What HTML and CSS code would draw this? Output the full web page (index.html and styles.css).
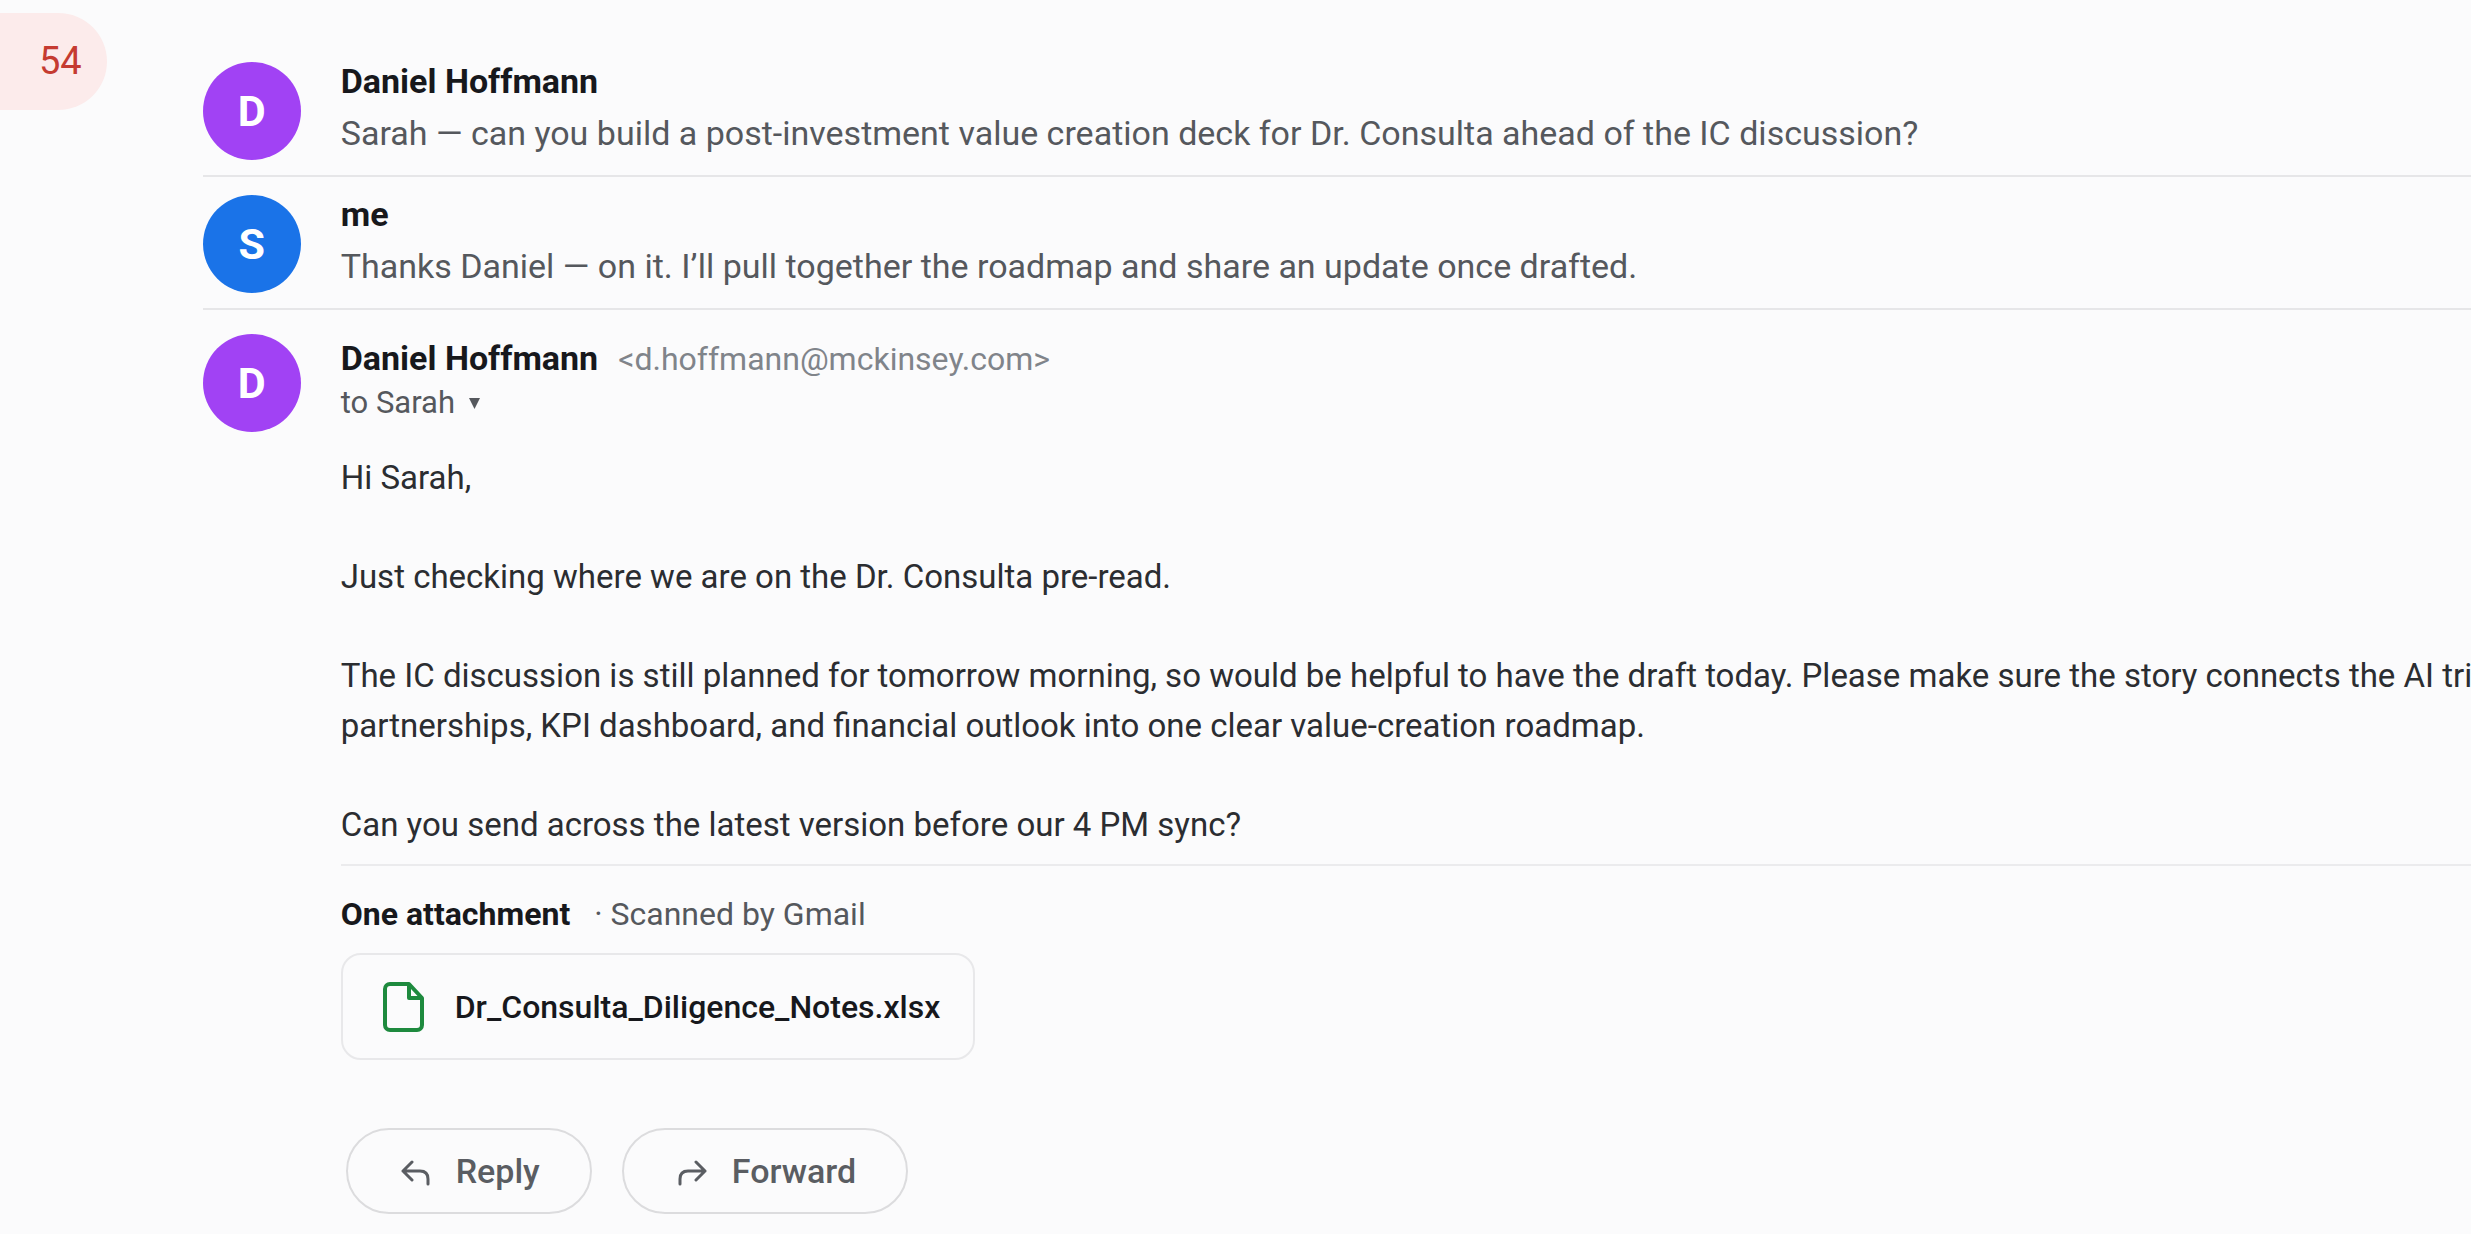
FILE: index.html
```html
<!DOCTYPE html>
<html lang="en">
<head>
<meta charset="utf-8">
<title>Dr. Consulta pre-read</title>
<link rel="stylesheet" href="styles.css">
</head>
<body>
<div class="mail">
  <aside class="sidebar">
    <a class="folder" href="#inbox" aria-label="Inbox, 54 unread">54</a>
  </aside>
  <main class="thread">
    <article class="message">
      <div class="avatar avatar-purple">D</div>
      <div class="summary">
        <h2 class="sender">Daniel Hoffmann</h2>
        <p class="preview">Sarah — can you build a post-investment value creation deck for Dr. Consulta ahead of the IC discussion?</p>
      </div>
    </article>
    <article class="message">
      <div class="avatar avatar-blue">S</div>
      <div class="summary">
        <h2 class="sender">me</h2>
        <p class="preview">Thanks Daniel — on it. I’ll pull together the roadmap and share an update once drafted.</p>
      </div>
    </article>
    <article class="message message-open">
      <div class="avatar avatar-purple">D</div>
      <div class="content">
        <header class="head">
          <div class="from">
            <h2 class="sender">Daniel Hoffmann</h2>
            <span class="address">&lt;d.hoffmann@mckinsey.com&gt;</span>
          </div>
          <button class="recipient" type="button">to Sarah
            <svg class="caret" viewBox="0 0 10 10" aria-hidden="true"><path d="M0 0h10L5 10z"/></svg>
          </button>
        </header>
        <div class="body">
          <p>Hi Sarah,</p>
          <p>Just checking where we are on the Dr. Consulta pre-read.</p>
          <p>The IC discussion is still planned for tomorrow morning, so would be helpful to have the draft today. Please make sure the story connects the AI tri<br>partnerships, KPI dashboard, and financial outlook into one clear value-creation roadmap.</p>
          <p>Can you send across the latest version before our 4 PM sync?</p>
        </div>
        <section class="attachments">
          <div class="attach-title"><h3>One attachment</h3><span>· Scanned by Gmail</span></div>
          <a class="file" href="#file">
            <svg class="file-icon" viewBox="0 0 42 50" aria-hidden="true"><path d="M7 2h19l13 14v27a5 5 0 0 1-5 5H7a5 5 0 0 1-5-5V7a5 5 0 0 1 5-5z"/><path d="M26 2v14h13"/></svg>
            <span>Dr_Consulta_Diligence_Notes.xlsx</span>
          </a>
        </section>
        <div class="actions">
          <button class="action" type="button">
            <svg class="arrow" viewBox="0 0 30 26" aria-hidden="true"><path d="M11 2L2 11l9 9M2 11h17q8 0 8 8v5"/></svg>
            Reply
          </button>
          <button class="action" type="button">
            <svg class="arrow" viewBox="0 0 30 26" aria-hidden="true"><path d="M19 2l9 9-9 9M28 11H11q-8 0-8 8v5"/></svg>
            Forward
          </button>
        </div>
      </div>
    </article>
  </main>
</div>
</body>
</html>
```

FILE: styles.css
```css
* { box-sizing: border-box; }

body {
  margin: 0;
  background: #fbfbfc;
  color: #17181c;
  font-family: Roboto, "Liberation Sans", sans-serif;
  overflow: hidden;
}

h2, h3, p { margin: 0; }

button { font-family: inherit; cursor: pointer; }

.mail {
  display: flex;
  gap: 96px;
  min-height: 100vh;
}

.sidebar {
  flex: none;
  padding-top: 13px;
}

.folder {
  display: flex;
  align-items: center;
  height: 97px;
  padding: 0 25px 2px 39px;
  border-radius: 0 49px 49px 0;
  background: #fcebeb;
  color: #c53b31;
  font-size: 38px;
  text-decoration: none;
}

.thread {
  flex: 1;
  min-width: 0;
  padding-top: 44px;
}

.message {
  display: flex;
  gap: 40px;
  padding: 18px 0 15px;
  border-bottom: 2px solid #e6e6e8;
}

.message-open {
  padding: 24px 0;
  border-bottom: 0;
}

.avatar {
  display: grid;
  place-items: center;
  flex: none;
  width: 98px;
  height: 98px;
  border-radius: 50%;
  color: #fff;
  font-size: 43px;
  font-weight: 700;
}

.avatar-purple { background: #a142f4; }
.avatar-blue { background: #1a73e8; }

.summary { line-height: 52px; margin-top: -7px; }

.sender {
  font-size: 34px;
  font-weight: 700;
}

.preview {
  color: #55585d;
  font-size: 34px;
}

.content {
  flex: 1;
  min-width: 0;
}

.from {
  display: flex;
  align-items: baseline;
  gap: 20px;
  line-height: 48px;
}

.address {
  color: #80848a;
  font-size: 32px;
}

.recipient {
  display: flex;
  align-items: center;
  gap: 14px;
  padding: 0;
  border: 0;
  background: none;
  color: #55585d;
  font-size: 31px;
  line-height: 40px;
}

.caret {
  width: 11px;
  height: 11px;
  fill: #55585d;
}

.body {
  display: grid;
  gap: 49px;
  padding: 30px 0 14px;
  border-bottom: 2px solid #ebebed;
  color: #2b2d31;
  font-size: 33px;
  line-height: 50px;
  white-space: nowrap;
}

.attachments { padding-top: 24px; }

.attach-title {
  display: flex;
  align-items: baseline;
  gap: 24px;
  color: #55585d;
  font-size: 32px;
  line-height: 48px;
}

.attach-title h3 {
  color: #17181c;
  font-size: 32px;
  font-weight: 700;
}

.file {
  display: inline-flex;
  align-items: center;
  gap: 30px;
  height: 107px;
  margin-top: 15px;
  padding: 0 33px 0 40px;
  border: 2px solid #e8e8ea;
  border-radius: 20px;
  color: #17181c;
  font-size: 32px;
  font-weight: 500;
  text-decoration: none;
}

.file-icon {
  width: 42px;
  height: 50px;
  fill: none;
  stroke: #1e8a3e;
  stroke-width: 4;
  stroke-linejoin: round;
}

.actions {
  display: flex;
  gap: 30px;
  padding: 68px 0 0 5px;
}

.action {
  display: flex;
  align-items: center;
  gap: 25px;
  height: 86px;
  padding: 0 50px 0 53px;
  border: 2px solid #dcdcde;
  border-radius: 43px;
  background: transparent;
  color: #5a5d62;
  font-size: 34px;
  font-weight: 500;
}

.arrow {
  width: 30px;
  height: 26px;
  margin-top: 4px;
  fill: none;
  stroke: currentColor;
  stroke-width: 3;
  stroke-linecap: round;
  stroke-linejoin: round;
}
```
